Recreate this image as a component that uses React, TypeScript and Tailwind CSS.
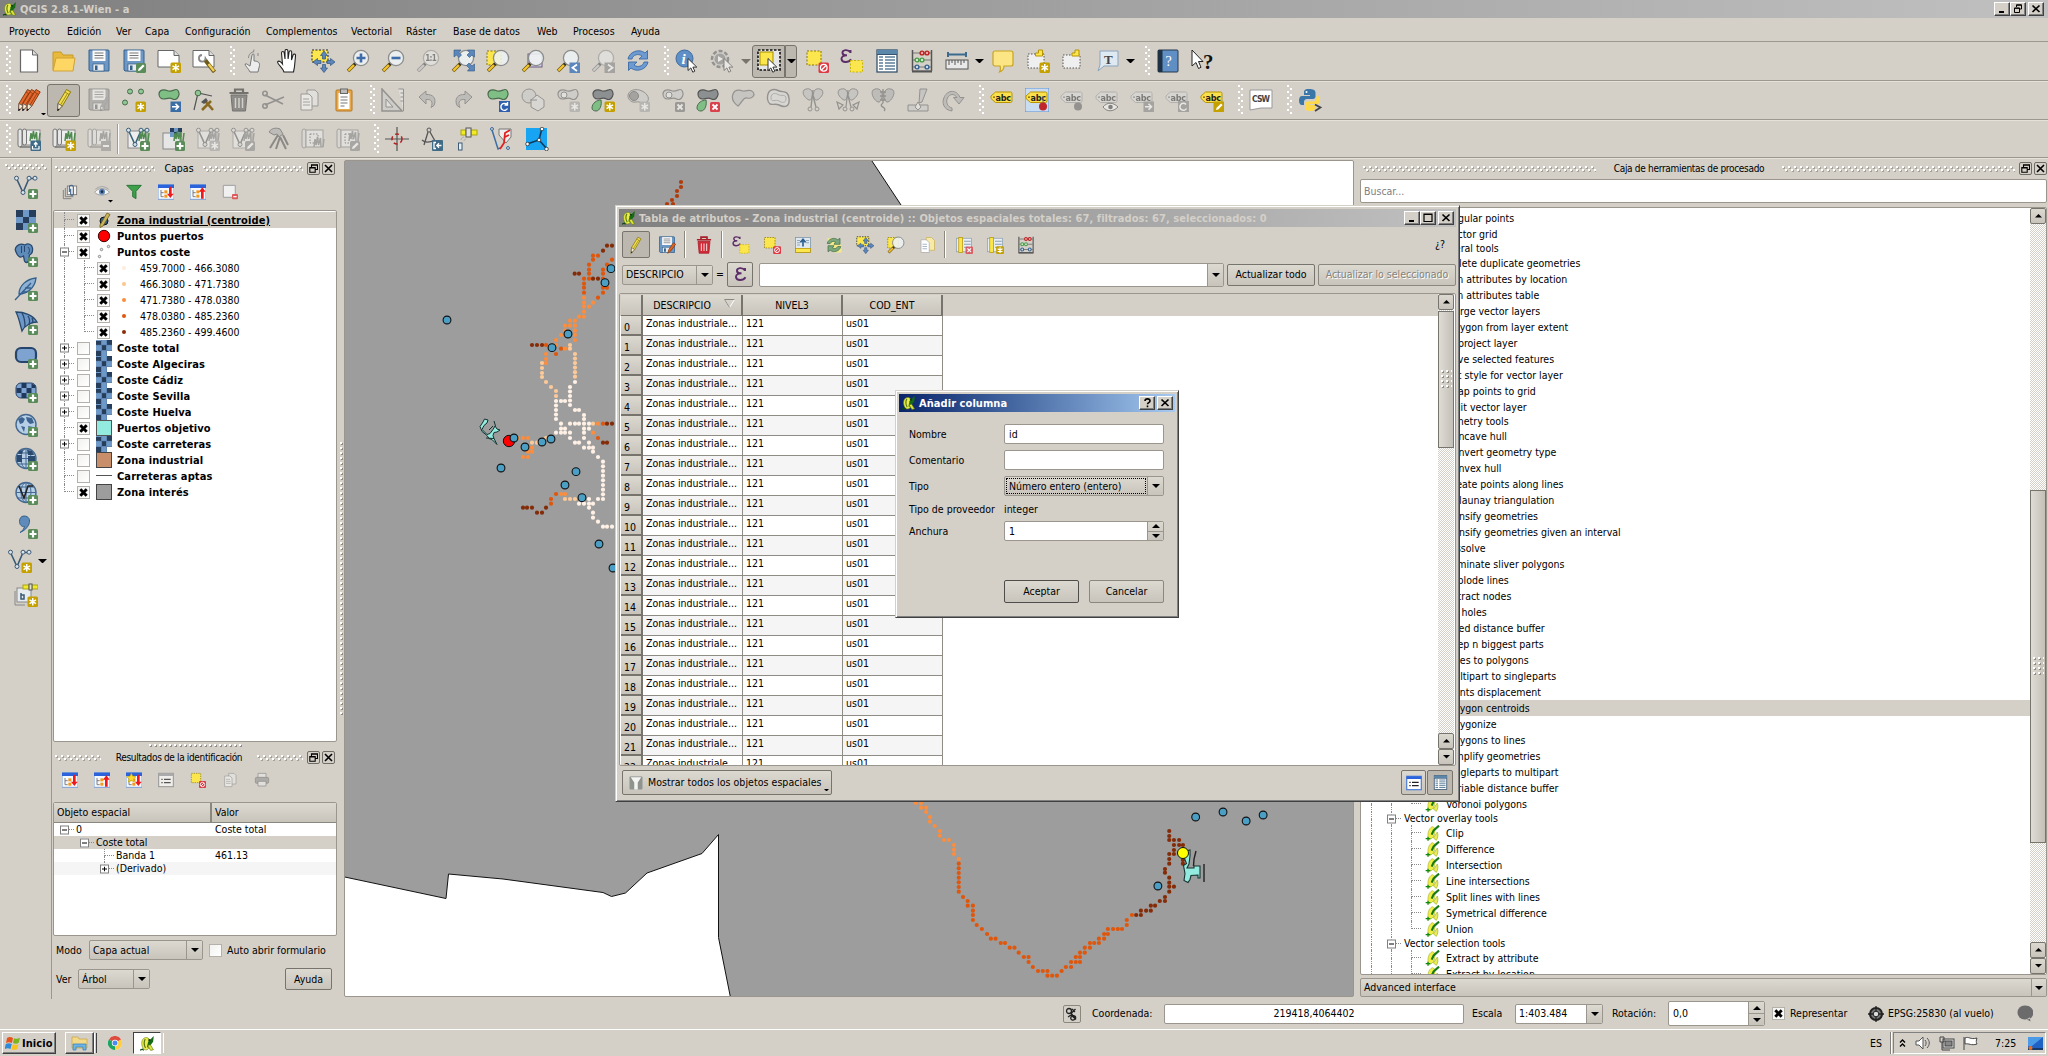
import React from "react";

type Kids = { children?: React.ReactNode };

/* ---------- icon building blocks ---------- */

function Svg({ children, s = 24, cls = "" }: Kids & { s?: number; cls?: string }) {
  return (
    <svg width={s} height={s} viewBox="0 0 24 24" fill="none" className={"shrink-0 " + cls}>
      {children}
    </svg>
  );
}

const StarBadge = () => (
  <g>
    <rect x="13.500" y="13.500" width="10.500" height="10.500" rx="1.500" fill="#c4a000" />
    <path d="M18.750 15v7.500M15.500 16.900l6.500 3.750M22 16.900l-6.500 3.750" stroke="#fff" strokeWidth="1.500" />
  </g>
);
const PlusBadge = () => (
  <g>
    <rect x="14" y="14" width="10" height="10" rx="1.500" fill="#5a8c5a" />
    <path d="M19 15.500v7M15.500 19h7" stroke="#fff" strokeWidth="2.200" />
  </g>
);
const PenBadge = () => (
  <g>
    <rect x="14" y="14" width="10" height="10" rx="1.500" fill="#5a8c5a" />
    <path d="M16 22l.6-2.200 4.400-4.400 1.600 1.600-4.400 4.400z" fill="#fff" />
  </g>
);
const RedX = () => (
  <g>
    <rect x="14" y="14" width="10" height="10" rx="1.500" fill="#d9424c" />
    <path d="M16.500 16.500l5 5M21.500 16.500l-5 5" stroke="#fff" strokeWidth="1.800" />
  </g>
);
const NoBadge = () => (
  <g>
    <rect x="13.500" y="13.500" width="10.500" height="10.500" rx="1.500" fill="#dc3b45" />
    <circle cx="18.750" cy="18.750" r="3.300" stroke="#fff" strokeWidth="1.300" />
    <path d="M16.500 21l4.500-4.500" stroke="#fff" strokeWidth="1.300" />
  </g>
);
const ArrowBadge = ({ c = "#3a6ea5" }: { c?: string }) => (
  <g>
    <rect x="13.500" y="13.500" width="10.500" height="10.500" fill={c} />
    <path d="M15 18.750h6M18.500 15.800l3 2.950-3 2.950" stroke="#fff" strokeWidth="1.600" />
  </g>
);
const Floppy = () => (
  <g>
    <path d="M2 1h19a1 1 0 0 1 1 1v20H3l-1-1z" fill="#6d97c4" stroke="#33608c" />
    <rect x="5.500" y="1.500" width="13" height="10.500" fill="#fbfbfb" />
    <path d="M7.500 4h9M7.500 6.500h9M7.500 9h9" stroke="#777" />
    <rect x="6" y="15" width="11" height="7" fill="#e8eaec" stroke="#33608c" strokeWidth=".7" />
    <rect x="8" y="16.500" width="2.500" height="4.500" fill="#33608c" />
  </g>
);
const Mag = ({ children }: Kids) => (
  <g>
    <path d="M2 22l7.500-7.500" stroke="#6b5200" strokeWidth="3.600" />
    <path d="M2.400 21.600l5.600-5.600" stroke="#f4c430" strokeWidth="2.200" />
    <path d="M8.200 15.800l2-2" stroke="#333" strokeWidth="2.600" />
    <circle cx="15" cy="9" r="7.600" fill="#eef1f2" fillOpacity=".88" stroke="#8a8d8c" strokeWidth="1.300" />
    {children}
  </g>
);
const Cursor = ({ x = 0, y = 0 }: { x?: number; y?: number }) => (
  <path
    transform={`translate(${x} ${y})`}
    d="M0 0v12l2.900-2.600 1.900 4.300 2-1-1.900-4.100h3.900z"
    fill="#fff"
    stroke="#222"
    strokeWidth=".9"
  />
);
const Pencil = ({ c = "#f0dc4c", d = "#8a7a10" }: { c?: string; d?: string }) => (
  <g>
    <path d="M6 15.500L14.500 1.500l4.200 2.400L10.300 18 5.500 23z" fill={c} stroke={d} strokeWidth="1" />
    <path d="M13 4l4.200 2.500M15.500 5.500L8.300 17.300" stroke={d} strokeWidth=".8" />
    <path d="M6 15.500l4.300 2.500L5.500 23z" fill="#f4ead0" stroke="#555" strokeWidth=".8" />
    <path d="M5.700 20.500l-.2 2.500 2-1.600z" fill="#111" />
  </g>
);
const Blob = ({ f = "#7fbf86", s = "#4a6b4c" }: { f?: string; s?: string }) => (
  <path
    d="M2 6C2 2 7 1 10 2.500s5 .3 8-.8 5 3 3.500 6.500-4 4-6.500 2.500S9 11 6.500 11 2 9 2 6z"
    fill={f}
    stroke={s}
    strokeWidth="1.200"
  />
);
const Grass = () => (
  <path d="M13 14l1-8 1 6 1.500-8 1 8 2-7 .5 9M22 14l1-8" stroke="#4f8a4f" strokeWidth="1.500" />
);
const GrassMap = () => (
  <g>
    <rect x="6" y="3" width="17" height="15" fill="#eee" stroke="#888" />
    <rect x="1" y="2" width="4" height="18" rx="2" fill="#e6e6e6" stroke="#777" />
    <rect x="5.500" y="2" width="4" height="16" rx="2" fill="#e6e6e6" stroke="#777" />
    <path d="M3 20h13" stroke="#777" strokeWidth="1.500" />
    <Grass />
  </g>
);
const Epsilon = () => (
  <path d="M10.500 3.500C8-.2 2 .8 2.500 4c.3 2 2.500 2.500 4.500 2.400-3 0-5.800 1-5.500 3.800.4 3.500 7 4 9.500 0M10.500 1v3" stroke="#5c2d68" strokeWidth="1.900" />
);
const SelYellow = ({ x = 1, y = 1, w = 15 }: { x?: number; y?: number; w?: number }) => (
  <rect x={x} y={y} width={w} height={w} fill="#fbe64d" stroke="#8a7400" strokeDasharray="2 1.500" />
);
const Vee = ({ c = "#3b5a75" }: { c?: string }) => (
  <g>
    <path d="M2.500 3.500l6.500 14L15 3.500h6" stroke={c} strokeWidth="1.600" />
    <circle cx="2.500" cy="3.200" r="2" fill="#d9e3ec" stroke={c} />
    <circle cx="9" cy="17.500" r="2" fill="#d9e3ec" stroke={c} />
    <circle cx="15" cy="3.200" r="2" fill="#d9e3ec" stroke={c} />
    <circle cx="21" cy="3.200" r="2" fill="#d9e3ec" stroke={c} />
  </g>
);
const Abacus = () => (
  <g>
    <path d="M2.500 1v21M21.500 1v21" stroke="#555" strokeWidth="1.500" />
    <path d="M2 22h20M3 4h18M3 11h18M3 18h18" stroke="#777" strokeWidth="1.200" />
    <g fill="#eaa" stroke="#b22" strokeWidth="1.400">
      <circle cx="12" cy="4" r="1.900" />
      <circle cx="17" cy="4" r="1.900" />
    </g>
    <g fill="#cec" stroke="#4a9a4a" strokeWidth="1.400">
      <circle cx="7" cy="11" r="1.900" />
      <circle cx="12" cy="11" r="1.900" />
    </g>
    <g fill="#cde" stroke="#37628f" strokeWidth="1.400">
      <circle cx="7" cy="18" r="1.900" />
      <circle cx="17" cy="18" r="1.900" />
    </g>
    <path d="M2 22.500h20" stroke="#555" strokeWidth="2" />
  </g>
);
const MoveArrows = () => (
  <g>
    <rect x="1" y="1" width="16" height="12" fill="#fbe64d" stroke="#222" strokeDasharray="2 1.500" />
    <g fill="#5c87bd" stroke="#2f5580" strokeWidth=".7">
      <path d="M13 2l3.500 4.500h-2V10h-3V6.500h-2z" />
      <path d="M13 23.500l3.500-4.500h-2v-3.500h-3V19h-2z" />
      <path d="M2 13l4.500-3.500v2H10v3H6.500v2z" />
      <path d="M24 13l-4.500-3.500v2H16v3h3.500v2z" />
    </g>
  </g>
);
const Tag = ({ hl = false }: { hl?: boolean }) => (
  <g>
    {hl && <rect x="0" y="0" width="24" height="24" fill="#c9dcf2" stroke="#5b8fcc" />}
    <path d="M5.500 4H20.500a1.500 1.500 0 0 1 1.500 1.500V13A1.500 1.500 0 0 1 20.500 14.500H5.500L1 10.500V8z" fill="#fbe04d" stroke="#b89400" />
    <circle cx="4" cy="9.200" r=".9" fill="#7a6200" />
    <text x="5.500" y="12.500" fontSize="9" fontWeight="700" fill="#222" fontFamily="DejaVu Sans Condensed" textLength="15.500">
      abc
    </text>
  </g>
);
const QLogo = () => (
  <g>
    <path d="M11 2.500C4.500 2 2 8 3 14s4 9 8 8 5-6 5-10-1-9-5-9.500z" fill="#e9ee4c" stroke="#6f8410" />
    <path d="M8.500 5c-2.500 3-2.500 10 .5 14" stroke="#5d7410" strokeWidth="2" />
    <path d="M22 0l-9 9-2 9 3 .5L21 9z" fill="#176a16" />
    <path d="M13.500 6l3 1" stroke="#0b3a0b" strokeWidth="3" />
    <path d="M12 15l5 8 4.500-1-5-8z" fill="#dfe63a" stroke="#5c7210" />
    <path d="M0 22.500l4-1.500 2 2" stroke="#0a4a0a" strokeWidth="2" />
  </g>
);
const QLeaf = () => (
  <g>
    <path d="M11 2.500C5 5 3 14 5.500 22l5-2c4-3 5-11 4-15.500z" fill="#f0ee46" stroke="#a9b52c" />
    <path d="M21 1l-8 7-3 6.500" stroke="#167a16" strokeWidth="3.200" />
    <path d="M12.500 19.500l6-9c1.500 4 1 9-1.500 12.500z" fill="#e9ec52" stroke="#9caf2a" />
    <path d="M1 20.500h7M4.500 17.500v6" stroke="#128a12" strokeWidth="2" />
  </g>
);
const Page = () => (
  <g>
    <path d="M3.500 1h12l5 5v17h-17z" fill="#fff" stroke="#666" strokeWidth="1.200" />
    <path d="M15.500 1v5h5" fill="#ddd" stroke="#666" />
  </g>
);
const TreeIcon = ({ up = false, star = false }: { up?: boolean; star?: boolean }) => (
  <g>
    <rect x="0" y="1" width="24" height="22" fill="#f4f8ff" stroke="#7d9fd6" strokeWidth="1.500" />
    <rect x="0" y="1" width="24" height="5" fill="#2a63dc" />
    <path d="M4.500 9v10h4M4.500 13h4" stroke="#777" strokeWidth="1.400" />
    <rect x="9.500" y="9.500" width="4.500" height="4.500" fill="#f29a1f" />
    <rect x="9.500" y="16" width="4.500" height="4.500" fill="#f29a1f" />
    {star && <path d="M8 2l2 4.500 5 .5-3.800 3.300L12.500 15 8 12.500 3.500 15l1.200-4.700L1 7l5-.5z" fill="#ffd92b" stroke="#c9a400" />}
    {up ? <path d="M18.500 5l5 6.500h-3V22h-4V11.500h-3z" fill="#f01818" /> : <path d="M18.500 21l5-6.500h-3V4h-4v10.500h-3z" fill="#f01818" />}
  </g>
);
const RasterSq = () => (
  <g>
    <rect x="2" y="1" width="20" height="20" fill="#6e98c8" />
    <path d="M2 1h7v7H2zM15 1h7v7h-7zM9 8h6v6H9zM2 14h7v7H2zM15 14h7v7h-7z" fill="#263d5c" />
  </g>
);
const Globe = () => (
  <g>
    <circle cx="12" cy="11.500" r="10" fill="#b6cfe6" stroke="#44688f" strokeWidth="1.400" />
    <ellipse cx="12" cy="11.500" rx="5" ry="10" stroke="#44688f" />
    <path d="M2 11.500h20M12 1.500v20M3.500 6h17M3.500 17h17" stroke="#44688f" />
  </g>
);
const TrashCan = ({ f, s, l }: { f: string; s: string; l: string }) => (
  <g>
    <path d="M4 7h16l-1.500 16h-13z" fill={f} stroke={s} />
    <path d="M2.500 5h19M8 4V1.500h8V4" stroke={s} strokeWidth="2.200" />
    <path d="M8.500 10v10M12 10v10M15.500 10v10" stroke={l} strokeWidth="1.500" />
  </g>
);

/* ---------- icon table ---------- */

const icons: Record<string, React.ReactNode> = {
  new: <Page />,
  open: (
    <g>
      <path d="M1 3h8l2 3h10v15H1z" fill="#e8b93a" stroke="#c79a28" />
      <path d="M4 9h19l-2 13H1z" fill="#fdd663" stroke="#cfa23a" />
    </g>
  ),
  save: <Floppy />,
  saveas: (
    <g>
      <Floppy />
      <PenBadge />
    </g>
  ),
  composer: (
    <g>
      <path d="M1 1.500h16l5 5V18H1z" fill="#fff" stroke="#666" />
      <path d="M17 1.500v5h5" fill="#ddd" stroke="#666" />
      <StarBadge />
    </g>
  ),
  manager: (
    <g>
      <path d="M1 1.500h16l5 5V18H1z" fill="#fff" stroke="#666" />
      <path d="M17 1.500v5h5" fill="#ddd" stroke="#666" />
      <path d="M10 6a3.300 3.300 0 1 0 3.500 3.500L15 12" stroke="#888" strokeWidth="1.800" />
      <path d="M13.500 11.500l9 11.500" stroke="#6f5a18" strokeWidth="4" />
      <path d="M16.500 15l5.500 7" stroke="#f2cf55" strokeWidth="2.400" />
    </g>
  ),
  touch: (
    <g>
      <path d="M9 23c-1-3-5-6-5-8 2-1 4 2 5 2l2-11c.5-1.500 2-1.500 2 0v6c3 0 6 1 5.500 4.500L17 23z" fill="#ececec" stroke="#777" />
      <path d="M7.500 9c0-4 3-6 5-6l.5-2.500M17 4v3" stroke="#888" />
    </g>
  ),
  pan: (
    <path
      d="M8 23c-1-4-6-7-6.500-10C3 11 5 13 6.500 15L5.500 4c0-2 2.500-2 2.700 0L9 10V2c.2-2 2.700-2 2.900 0l.2 8 1-7c.3-1.800 2.600-1.600 2.600.3L15.500 11l1.600-5c.6-1.600 2.600-1 2.400.6C19 12 19 17 17.500 23z"
      fill="#fff"
      stroke="#222"
      strokeWidth="1.100"
    />
  ),
  pansel: <MoveArrows />,
  zin: (
    <Mag>
      <path d="M15 4.500v9M10.500 9h9" stroke="#3d6ca8" strokeWidth="2.600" />
    </Mag>
  ),
  zout: (
    <Mag>
      <path d="M10.500 9h9" stroke="#3d6ca8" strokeWidth="2.600" />
    </Mag>
  ),
  z11: (
    <Mag>
      <text x="9.300" y="12" fontSize="8" fontWeight="700" fill="#333" fontFamily="DejaVu Sans Condensed" textLength="11.500">
        1:1
      </text>
    </Mag>
  ),
  zfull: (
    <g>
      <Mag />
      <g fill="#5c87bd" stroke="#2f5580" strokeWidth=".6">
        <path d="M3 1h7L8 3.500 10.500 6 8 8.500 5.500 6 3 8z" />
        <path d="M23.500 1h-7l2 2.500L16 6l2.500 2.500L21 6l2.500 2z" />
        <path d="M23.500 22h-7l2-2.500-3-3 2.500-2.500 3 3 2.500-2z" />
      </g>
    </g>
  ),
  zsel: (
    <g>
      <SelYellow x={1} y={2} w={14} />
      <Mag />
    </g>
  ),
  zlay: (
    <g>
      <rect x="7" y="5" width="14" height="13" fill="#d8d0e8" stroke="#6b5a80" />
      <Mag />
    </g>
  ),
  zlast: (
    <g>
      <Mag />
      <rect x="13.500" y="13.500" width="10.500" height="10.500" fill="#5c87bd" />
      <path d="M21 15.500l-4.500 3.200 4.500 3.200" stroke="#fff" strokeWidth="1.800" />
    </g>
  ),
  znext: (
    <g>
      <Mag />
      <rect x="13.500" y="13.500" width="10.500" height="10.500" fill="#777" />
      <path d="M17 15.500l4.500 3.200-4.500 3.200" stroke="#fff" strokeWidth="1.800" />
    </g>
  ),
  refresh: (
    <g fill="#6d9bd1" stroke="#3a6aa5" strokeWidth=".9">
      <path d="M2 10C3 3 13-1 19 4l2.500-2.500V10H13l3-3c-4-3-9-1-10 3z" />
      <path d="M22 13c-1 7-11 11-17 6l-2.500 2.500V13H11l-3 3c4 3 9 1 10-3z" />
    </g>
  ),
  info: (
    <g>
      <circle cx="9.500" cy="9.500" r="8.500" fill="#5e8fc6" stroke="#3d6a9f" />
      <text x="6.500" y="15" fontSize="15" fontStyle="italic" fontWeight="700" fill="#fff" fontFamily="Liberation Serif">
        i
      </text>
      <Cursor x={13} y={9.500} />
    </g>
  ),
  action: (
    <g>
      <circle cx="10" cy="10" r="8" fill="#ccc" stroke="#555" strokeWidth="2.500" strokeDasharray="4 2" />
      <circle cx="10" cy="10" r="5.500" fill="#777" />
      <path d="M8 7l5 3-5 3z" fill="#fff" />
      <Cursor x={14} y={9.500} />
    </g>
  ),
  select: (
    <g>
      <rect x="1" y="1" width="22" height="20" fill="#e6e6e6" stroke="#111" strokeWidth="1.600" strokeDasharray="2.500 1.500" />
      <rect x="3" y="3" width="13" height="13" fill="#fbe64d" stroke="#a58d00" />
      <Cursor x={11} y={9.500} />
    </g>
  ),
  desel: (
    <g>
      <SelYellow x={2} y={2} w={14} />
      <NoBadge />
    </g>
  ),
  expr: (
    <g>
      <Epsilon />
      <rect x="10.500" y="11.500" width="12" height="11.500" fill="#fbe64d" stroke="#c9b400" strokeDasharray="2 1.500" />
    </g>
  ),
  table: (
    <g>
      <rect x="2" y="1" width="20" height="22" fill="#fff" stroke="#35536e" strokeWidth="1.300" />
      <rect x="2" y="1" width="20" height="4" fill="#5b87ab" />
      <path d="M2 5.500h20" stroke="#35536e" />
      <path d="M4 8h4M10 8h10M4 11h4M10 11h10M4 14h4M10 14h10M4 17h4M10 17h10M4 20h4M10 20h10" stroke="#5b7d99" strokeWidth="1.500" />
    </g>
  ),
  abacus: <Abacus />,
  measure: (
    <g>
      <path d="M3 5.500h18M3 3v5M21 3v5" stroke="#3b6a8f" strokeWidth="2" />
      <rect x="1" y="11" width="22" height="9" fill="#e9e9e9" stroke="#555" />
      <path d="M4 11v5M7 11v3M10 11v5M13 11v3M16 11v5M19 11v3" stroke="#555" />
    </g>
  ),
  tip: (
    <path d="M4 2h16a2 2 0 0 1 2 2v11a2 2 0 0 1-2 2h-7c0 3-1.500 5-4.500 6 1-2 1.200-4 .5-6H4a2 2 0 0 1-2-2V4a2 2 0 0 1 2-2z" fill="#fbe584" stroke="#c9a420" strokeWidth="1.200" />
  ),
  bmnew: (
    <g>
      <rect x="2" y="5" width="16" height="14" fill="#efefef" stroke="#555" strokeDasharray="1.500 1.500" />
      <path d="M12.500 1h4v6h-7V4h3z" fill="#fbe64d" stroke="#b89400" />
      <StarBadge />
    </g>
  ),
  bm: (
    <g>
      <rect x="2" y="6" width="17" height="13" fill="#efefef" stroke="#555" strokeDasharray="1.500 1.500" />
      <path d="M14 1h4v6h-7V4h3z" fill="#fbe64d" stroke="#b89400" />
    </g>
  ),
  textann: (
    <g>
      <path d="M4 2h18v15H8l-6 5 2-6z" fill="#dfe9f2" stroke="#8aa4bd" />
      <text x="8" y="14.500" fontSize="13" fontWeight="700" fill="#444" fontFamily="Liberation Serif">
        T
      </text>
    </g>
  ),
  help: (
    <g>
      <rect x="2" y="1" width="20" height="22" rx="1" fill="#5f8fc4" stroke="#24384c" />
      <rect x="2" y="1" width="4.500" height="22" fill="#1f3145" />
      <text x="9.500" y="17" fontSize="14" fill="#fff" fontFamily="Liberation Serif">
        ?
      </text>
    </g>
  ),
  whats: (
    <g>
      <path d="M1 1v16l4-3.500 2.500 6 2.500-1.200L7.500 12.500H12z" fill="#fff" stroke="#222" />
      <text x="12" y="20" fontSize="21" fontWeight="700" fill="#111" fontFamily="Liberation Serif">
        ?
      </text>
    </g>
  ),
  pencils: (
    <g>
      <g transform="translate(-4 0)">
        <Pencil c="#e8692e" d="#8a3a10" />
      </g>
      <g transform="translate(0 0)">
        <Pencil c="#e8692e" d="#8a3a10" />
      </g>
      <g transform="translate(4.500 0)">
        <Pencil c="#e8692e" d="#8a3a10" />
      </g>
    </g>
  ),
  pencil: <Pencil />,
  savepen: (
    <g>
      <Floppy />
      <g transform="translate(10 8) scale(.65)">
        <Pencil c="#e08040" />
      </g>
    </g>
  ),
  addpt: (
    <g>
      <g fill="#8fc794" stroke="#4a6b4c">
        <circle cx="8" cy="3.500" r="2.500" />
        <circle cx="19" cy="3.500" r="2.500" />
        <circle cx="3" cy="14.500" r="2.500" />
      </g>
      <StarBadge />
    </g>
  ),
  movef: (
    <g>
      <Blob />
      <ArrowBadge />
    </g>
  ),
  node: (
    <g>
      <path d="M2 22L6 5l14 3" stroke="#555" strokeWidth="1.200" />
      <circle cx="6" cy="5" r="2.800" fill="#8fc794" stroke="#4a6b4c" />
      <path d="M10 22l9-9M21 22l-8-9" stroke="#8a6a20" strokeWidth="2.600" />
      <path d="M9 14l5-4 2 3-4 3z" fill="#555" />
    </g>
  ),
  trash: <TrashCan f="#8e8c88" s="#74726e" l="#d4d0c8" />,
  cut: (
    <g stroke="#555" strokeWidth="1.600">
      <path d="M3 7l18 9M3 17l19-8" />
      <circle cx="3" cy="5.500" r="2.200" />
      <circle cx="3" cy="18" r="2.200" />
    </g>
  ),
  copy: (
    <g>
      <path d="M10 2h8l3 3v13H10z" fill="#eee" stroke="#666" />
      <path d="M4 6h8l3 3v13H4z" fill="#fff" stroke="#666" />
      <path d="M6 11h6M6 14h7M6 17h7" stroke="#777" />
    </g>
  ),
  paste: (
    <g>
      <rect x="4" y="2" width="16" height="21" rx="1" fill="#e9a84a" stroke="#b5771f" />
      <rect x="6.500" y="5" width="11" height="16" fill="#fff" />
      <rect x="8.500" y="1" width="7" height="4.500" fill="#bbb" stroke="#666" />
      <path d="M8.500 9h7M8.500 12h7M8.500 15h7M8.500 18h4" stroke="#777" />
    </g>
  ),
  cad: (
    <g>
      <path d="M1 1v22h20z" fill="#ccc" stroke="#555" strokeWidth="1.500" />
      <path d="M5 11v8h7z" fill="#eee" stroke="#555" />
      <path d="M17.500 1h5v22" stroke="#555" fill="#eee" />
      <path d="M19.500 5h3M19.500 9h3M19.500 13h3" stroke="#555" />
    </g>
  ),
  undo: <path d="M3 9l7-6v3.500c7-.5 11 4 8 11l-3 2c2.500-6 0-8.500-5-8V16z" fill="#aaa" stroke="#555" />,
  redo: <path d="M21 9l-7-6v3.500c-7-.5-11 4-8 11l3 2c-2.500-6 0-8.500 5-8V16z" fill="#aaa" stroke="#555" />,
  rotate: (
    <g>
      <Blob />
      <rect x="13" y="13" width="11" height="11" fill="#2f5fae" />
      <path d="M21.500 20.500a3.500 3.500 0 1 1-.5-4M21.500 14v3h-3" stroke="#fff" strokeWidth="1.400" />
    </g>
  ),
  simplify: (
    <g>
      <circle cx="8" cy="8" r="7" fill="#ccc" stroke="#555" />
      <path d="M10 12l6-5 7 5v7l-6 4-7-4z" fill="#ddd" stroke="#555" />
      <path d="M9 12h7" stroke="#555" />
    </g>
  ),
  ring: (
    <g>
      <Blob f="#ccc" s="#555" />
      <circle cx="8" cy="7" r="3" fill="#eee" stroke="#555" />
      <StarBadge />
    </g>
  ),
  part: (
    <g>
      <Blob f="#8d9090" s="#555" />
      <path d="M1 20c0-5 5-8 9-8 1 5-1 11-5 11-2 0-4-1-4-3z" fill="#7fbf86" stroke="#4a6b4c" />
      <StarBadge />
    </g>
  ),
  fillring: (
    <g>
      <path d="M2 8C2 2 10 0 16 3s8 8 5 11-7-1-11 0-8-2-8-6z" fill="#ccc" stroke="#555" />
      <circle cx="8" cy="8" r="4.500" fill="#777" stroke="#444" />
      <StarBadge />
    </g>
  ),
  delring: (
    <g>
      <Blob f="#ccc" s="#555" />
      <circle cx="8" cy="7" r="3" fill="#eee" stroke="#555" />
      <RedX />
    </g>
  ),
  delpart: (
    <g>
      <Blob f="#8d9090" s="#555" />
      <path d="M1 20c0-5 5-8 9-8 1 5-1 11-5 11-2 0-4-1-4-3z" fill="#7fbf86" stroke="#4a6b4c" />
      <RedX />
    </g>
  ),
  reshape: <path d="M2 6c2-5 7-4 10-3s7-3 10 1-2 7-6 6-5 5-9 8C3 15 0 11 2 6z" fill="#bbb" stroke="#555" strokeWidth="1.200" />,
  offset: (
    <g>
      <path d="M1.500 11C1 2 7 0 12 2.500s10-1 11 8-5 9-10 6.500-10 3-11.500-6z" fill="#ddd" stroke="#555" strokeWidth="1.400" />
      <path d="M5 10c0-5 4-5.500 7-3.500s8-1 8 4-4 4.500-7 2.500-8 2-8-3z" stroke="#888" />
    </g>
  ),
  split: (
    <g stroke="#555">
      <path d="M3 2c5-3 8 0 8.500 3s-1 8-3.500 7-8-6-5-10zM21 2c-5-3-8 0-8.500 3s1 8 3.500 7 8-6 5-10z" fill="#bbb" />
      <path d="M12 2l-2 17M12 8l3 11" strokeWidth="1.400" />
      <circle cx="9" cy="21" r="2" />
      <circle cx="16" cy="21" r="2" />
    </g>
  ),
  splitp: (
    <g stroke="#555">
      <path d="M3 2c5-3 8 0 8.500 3s-1 8-3.500 7-8-6-5-10zM21 2c-5-3-8 0-8.500 3s1 8 3.500 7 8-6 5-10z" fill="#bbb" />
      <path d="M12 2l-2 17M12 8l3 11M1 14l6 3-4 4zM23 14l-6 3 4 4z" strokeWidth="1.200" />
      <circle cx="9" cy="21" r="2" />
      <circle cx="16" cy="21" r="2" />
    </g>
  ),
  merge: (
    <g stroke="#555">
      <path d="M2 2c5-3 8 0 9 3s-1 10-4 9-8-8-5-12zM22 2c-5-3-8 0-9 3s1 10 4 9 8-8 5-12z" fill="#aaa" />
      <path d="M12 1v14M9 4h6M9 8h6M9 12h6M12 15c-6 4 5 4 1 8" strokeWidth="1.400" />
    </g>
  ),
  ptsym: (
    <g stroke="#555">
      <path d="M14 1h7l-5 13-3 1z" fill="#bbb" />
      <path d="M2 17h20v6H2z" fill="#ccc" />
      <path d="M12 14l3 5-3 3-3-3z" fill="#eee" />
    </g>
  ),
  rotpt: <path d="M11 23C3 22 0 15 3.500 8.500S15.500 1 19 9.500h4L18 16l-5.500-6.500H16C13 5 8.500 6 6.500 10S6.500 19 11 20z" fill="#aaa" stroke="#555" />,
  abc: <Tag />,
  abcpin: (
    <g>
      <Tag hl />
      <path d="M18 8v8" stroke="#777" />
      <circle cx="18" cy="18.500" r="4" fill="#c0272d" />
    </g>
  ),
  abcpin2: (
    <g>
      <Tag />
      <circle cx="18" cy="18.500" r="4" fill="#555" />
    </g>
  ),
  abceye: (
    <g>
      <Tag />
      <path d="M8 19c4-5 10-5 15 0-5 5-11 5-15 0z" fill="#fff" stroke="#333" />
      <circle cx="15.500" cy="19" r="2.300" fill="#333" />
    </g>
  ),
  abcmove: (
    <g>
      <Tag />
      <ArrowBadge c="#777" />
    </g>
  ),
  abcrot: (
    <g>
      <Tag />
      <rect x="13" y="13" width="11" height="11" fill="#777" />
      <path d="M21.500 20.500a3.500 3.500 0 1 1-.5-4" stroke="#fff" strokeWidth="1.500" />
    </g>
  ),
  abced: (
    <g>
      <Tag />
      <rect x="13.500" y="13.500" width="10.500" height="10.500" fill="#c4a000" />
      <path d="M16 22l.6-2.200 4.400-4.400 1.600 1.600-4.400 4.400z" fill="#fff" />
    </g>
  ),
  csw: (
    <g>
      <path d="M1 2h22v18H12l-11 2z" fill="#fff" stroke="#999" />
      <text x="3" y="13.500" fontSize="8.500" fontWeight="700" fill="#444" fontFamily="DejaVu Sans Condensed" textLength="18">
        CSW
      </text>
    </g>
  ),
  python: (
    <g>
      <path d="M11 1c-5 0-5 2-5 3.500V7h6v1H4C2 8 1 10 1 12.500S2 17 4 17h2v-3c0-2 1.500-3 3-3h6c1.500 0 2.500-1 2.500-2.500V4.500C17.500 2 15 1 11 1z" fill="#3b76a9" />
      <path d="M12 23c5 0 5-2 5-3.500V17h-6v-1h8c2 0 3-2 3-4.500S21 8 19.500 8h-1v2.500c0 2-1.500 3-3 3H10c-1.500 0-3 1-3 2.500v3.500C7 22 9 23 12 23z" fill="#ffd947" />
      <circle cx="8.500" cy="4" r="1" fill="#fff" />
      <path d="M17 16.500l5.500 3-5.500 3.500" stroke="#444" strokeWidth="1.800" />
    </g>
  ),
  gopen: (
    <g>
      <GrassMap />
      <rect x="13.500" y="13.500" width="10.500" height="10.500" rx="1" fill="#3f6b87" />
      <path d="M15.500 19v3h6.500v-3M18.750 20v-4M17 17.500l1.750-2 1.750 2" stroke="#fff" strokeWidth="1.200" />
    </g>
  ),
  gnew: (
    <g>
      <GrassMap />
      <StarBadge />
    </g>
  ),
  gclose: (
    <g>
      <GrassMap />
      <rect x="14" y="14" width="10" height="10" fill="#888" />
      <path d="M16 19h6" stroke="#fff" strokeWidth="2" />
    </g>
  ),
  gvec: (
    <g>
      <rect x="2" y="4" width="19" height="17" fill="#eee" stroke="#888" />
      <Vee c="#3b6277" />
      <Grass />
      <PlusBadge />
    </g>
  ),
  grast: (
    <g>
      <rect x="2" y="6" width="17" height="16" fill="#e6e6e6" stroke="#888" />
      <rect x="9" y="1" width="12" height="9" fill="#6e98c8" />
      <path d="M9 1h4v4H9zM17 1h4v4h-4zM13 5h4v4h-4z" fill="#263d5c" />
      <Grass />
      <PlusBadge />
    </g>
  ),
  gvnew: (
    <g>
      <rect x="2" y="4" width="19" height="17" fill="#eee" stroke="#888" />
      <Vee c="#555" />
      <Grass />
      <StarBadge />
    </g>
  ),
  gved: (
    <g>
      <rect x="2" y="4" width="19" height="17" fill="#eee" stroke="#888" />
      <Vee c="#555" />
      <Grass />
      <PenBadge />
    </g>
  ),
  gtools: (
    <g stroke="#444">
      <path d="M3 5c3-5 9-4 11-3l3 5-4 3-2-3-3 1z" fill="#aaa" />
      <path d="M12 8l-8 13M14 10l6 12M10 22l4-12M17 8l5 10" strokeWidth="2" />
    </g>
  ),
  greg: (
    <g>
      <rect x="1" y="2" width="4" height="19" rx="2" fill="#ddd" stroke="#777" />
      <rect x="5" y="3" width="17" height="17" fill="#eee" stroke="#777" />
      <rect x="9" y="7" width="8" height="9" stroke="#444" strokeDasharray="1.500 1.500" />
      <g transform="translate(0 6)">
        <Grass />
      </g>
    </g>
  ),
  greged: (
    <g>
      <rect x="1" y="2" width="4" height="19" rx="2" fill="#ddd" stroke="#777" />
      <rect x="5" y="3" width="17" height="17" fill="#eee" stroke="#777" />
      <rect x="9" y="7" width="8" height="9" stroke="#444" strokeDasharray="1.500 1.500" />
      <Grass />
      <PenBadge />
    </g>
  ),
  cross: (
    <g>
      <path d="M0 12h24M12 0v24" stroke="#555" strokeWidth="1.200" />
      <circle cx="12" cy="12" r="5" stroke="#b02020" strokeWidth="1.500" strokeDasharray="4 3" />
    </g>
  ),
  coord: (
    <g>
      <circle cx="9" cy="3" r="2" stroke="#555" />
      <path d="M8 5L4 18M10 5l5 9M2 13c4 4 9 2 13 0" stroke="#555" strokeWidth="1.300" />
      <rect x="12" y="13" width="11" height="11" rx="1" fill="#3f6b87" />
      <path d="M16 15.500h-2v6h2M21.500 18.500H17M19 16.200l-2.200 2.300 2.200 2.300" stroke="#fff" strokeWidth="1.300" />
    </g>
  ),
  gps: (
    <g>
      <rect x="6" y="3" width="5" height="5" fill="#f1ea26" stroke="#a9a410" />
      <rect x="16" y="3" width="6" height="5" fill="#f1ea26" stroke="#a9a410" />
      <rect x="11" y="1" width="5" height="9" fill="#ddd" stroke="#555" />
      <rect x="3.500" y="16" width="3.500" height="7" fill="#e7eef5" stroke="#3b5a75" />
      <path d="M6 13c0-2 2-3 3-3M9 14c0-1 1-2 2-2" stroke="#aaa" />
    </g>
  ),
  route: (
    <g>
      <path d="M2 3l6 19 2-1" stroke="#3a6ea5" strokeWidth="1.500" />
      <path d="M9 2h12v8l-5 6-7-8z" fill="#eee" stroke="#777" />
      <path d="M10 22l4-6 1-10 5-3M15 10l4-2" stroke="#d22" strokeWidth="1.800" />
      <circle cx="2" cy="2" r="1.500" stroke="#3a6ea5" />
      <circle cx="18" cy="21" r="1.500" stroke="#3a6ea5" />
    </g>
  ),
  topo: (
    <g>
      <rect x="1" y="1" width="21" height="22" fill="#16a4f3" />
      <path d="M17 1l-3 12-12 4M14 13l8 9" stroke="#0b3a5c" strokeWidth="1.600" />
      <g fill="#fff" stroke="#333" strokeWidth=".8">
        <circle cx="17" cy="2" r="1.800" />
        <circle cx="14" cy="13" r="1.800" />
        <circle cx="2.500" cy="17" r="1.800" />
        <circle cx="21.500" cy="22" r="1.800" />
      </g>
    </g>
  ),
  /* layer sources */
  lvec: (
    <g>
      <Vee />
      <PlusBadge />
    </g>
  ),
  lrast: (
    <g>
      <RasterSq />
      <PlusBadge />
    </g>
  ),
  lpg: (
    <g>
      <path d="M3 3c3-3 6-2 8-1 3-2 7-1 7.500 3s-1 6-3 7l-1 6c-1 2-3 2-4 0l-1-5c-3 2-5 1-6.500-2S0 6 3 3z" fill="#5f8bbb" stroke="#27496e" strokeWidth="1.300" />
      <path d="M7.500 3v7M14 4c2 2 2 5 0 7M10.500 3v6" stroke="#27496e" />
      <PlusBadge />
    </g>
  ),
  lfeat: (
    <g>
      <path d="M22 1C12 2 5 9 5 17c8 0 16-6 17-16z" fill="#8fb1d4" stroke="#33608c" strokeWidth="1.300" />
      <path d="M1 23L17 6M8 15h5M11 11h6" stroke="#33608c" strokeWidth="1.300" />
      <PlusBadge />
    </g>
  ),
  lmssql: (
    <g>
      <path d="M2 1c8 0 17 3 21 10-5 0-12 3-15 9C6 13 5 7 2 1z" fill="#6e98c8" stroke="#27496e" strokeWidth="1.300" />
      <path d="M8 2c3 5 3 10 3 14M14 5c2 3 2 6 1 9M18 7c1 2 1 4 0 5" stroke="#27496e" strokeWidth="1.300" />
      <PlusBadge />
    </g>
  ),
  lora: (
    <g>
      <rect x="2" y="3" width="20" height="14" rx="5" fill="#7ea3d0" stroke="#26456b" strokeWidth="2.200" />
      <PlusBadge />
    </g>
  ),
  lorar: (
    <g>
      <rect x="2" y="4" width="20" height="15" rx="5" fill="#7ea3d0" stroke="#26456b" />
      <path d="M2.500 9h5v5h-5zM7.500 4h5v5h-5zM12.500 9h5v5h-5zM17.500 4.500l4 2V9h-4zM7.500 14h5v5h-5z" fill="#1f3a5c" />
      <PlusBadge />
    </g>
  ),
  lwms: (
    <g>
      <circle cx="12" cy="11.500" r="10" fill="#b6cfe6" stroke="#44688f" strokeWidth="1.400" />
      <path d="M4 6l4-2 3 2-2 4-3 1zM12 4l6 1 2 5-4 1-3-3zM7 13l4 1-1 5zM14 13l5 1-3 4z" fill="#3d6490" />
      <PlusBadge />
    </g>
  ),
  lwcs: (
    <g>
      <Globe />
      <path d="M5 4l4-1-1 4H4zM13 3l5 1 2 4h-6zM3 8h5v7H3zM14 9h7v6h-7z" fill="#2b4a70" />
      <PlusBadge />
    </g>
  ),
  lwfs: (
    <g>
      <Globe />
      <path d="M5 5l5 12 4-12h5" stroke="#222" strokeWidth="1.600" />
      <PlusBadge />
    </g>
  ),
  lcsv: (
    <g>
      <path d="M10 1c5 0 6.500 4 5 8s-5 7-9 8.500c3-2 4-4 4.500-6-3 .5-5-2-5-5S7 1 10 1z" fill="#5f8bbb" stroke="#33608c" />
      <PlusBadge />
    </g>
  ),
  lnew: (
    <g>
      <Vee />
      <StarBadge />
    </g>
  ),
  lgps: (
    <g>
      <path d="M1 8v14h10" stroke="#888" />
      <rect x="3" y="5" width="14" height="14" fill="#e6ebef" stroke="#888" />
      <rect x="9" y="2" width="6" height="4" fill="#f1ea26" stroke="#a9a410" />
      <rect x="18" y="2" width="6" height="4" fill="#f1ea26" stroke="#a9a410" />
      <rect x="15" y="1" width="3" height="6" fill="#ddd" stroke="#555" />
      <path d="M7 10v6h3v-4H7" stroke="#3b5a75" strokeWidth="1.500" />
      <StarBadge />
    </g>
  ),
  /* layer panel */
  addgroup: (
    <g>
      <path d="M2 9v13h12M5 6v13h12" stroke="#777" strokeWidth="1.300" />
      <rect x="8" y="3" width="14" height="13" fill="#f4f4f4" stroke="#777" strokeWidth="1.300" />
      <path d="M11 12V5a3 3 0 0 1 6 0v10a2 2 0 0 1-4 0V7" stroke="#3a5f85" strokeWidth="1.600" />
    </g>
  ),
  eye: (
    <g>
      <path d="M1 12.500C6 5 18 5 23 12.500 18 18 6 18 1 12.500z" fill="#f5f5f5" stroke="#999" strokeWidth="1.300" />
      <path d="M2 8C8 2.500 16 2.500 22 8" stroke="#aaa" strokeWidth="1.600" />
      <circle cx="12" cy="11.500" r="4.500" fill="#5d82b8" />
      <circle cx="12" cy="11.500" r="2" fill="#1b2f4d" />
    </g>
  ),
  filter: <path d="M1 2h22l-8 9v11l-5-3v-8z" fill="#3fa04b" stroke="#1f6e2c" strokeWidth="1.300" />,
  expand: <TreeIcon />,
  collapse: <TreeIcon up />,
  expnew: <TreeIcon star />,
  remove: (
    <g>
      <rect x="2" y="2" width="18" height="18" rx="1" fill="#f0f0f0" stroke="#aaa" strokeWidth="1.800" />
      <rect x="15" y="15" width="9" height="8" rx="1.500" fill="#dd5a5a" />
      <path d="M17 19h5" stroke="#fff" strokeWidth="1.800" />
    </g>
  ),
  form: (
    <g>
      <rect x="1" y="2" width="22" height="20" fill="#efeeeb" stroke="#999" strokeWidth="1.600" />
      <path d="M1 4h22" stroke="#aaa" strokeWidth="4" />
      <path d="M5 11h2M9 11h10M5 16h2M9 16h10" stroke="#555" strokeWidth="2" />
    </g>
  ),
  formb: (
    <g>
      <rect x="1" y="2" width="22" height="20" fill="#fff" stroke="#5a86d8" strokeWidth="2" />
      <path d="M1 4h22" stroke="#2a63dc" strokeWidth="4" />
      <path d="M5 11h2M9 11h10M5 16h2M9 16h10" stroke="#222" strokeWidth="2" />
    </g>
  ),
  print: (
    <g stroke="#444">
      <path d="M6 8V2h12v6" fill="#eee" />
      <rect x="2" y="8" width="20" height="9" rx="2" fill="#888" />
      <path d="M6 14h12v7H6z" fill="#eee" />
    </g>
  ),
  /* attribute table */
  floppyed: (
    <g>
      <Floppy />
      <path d="M13 23l1.500-5 6-9 3 2-6.500 9z" fill="#e0661f" stroke="#8a3a10" />
    </g>
  ),
  trashred: <TrashCan f="#cf2b36" s="#a81f2a" l="#f3c9cc" />,
  seltop: (
    <g>
      <rect x="2" y="2" width="20" height="20" fill="#dfe8ef" stroke="#7b93a8" />
      <path d="M4 6h4M4 9h4M4 12h4M16 6h4M16 9h4" stroke="#7b93a8" />
      <path d="M12 14V5M8.500 8.500L12 4.500l3.500 4" stroke="#2f5f8f" strokeWidth="2.200" />
      <rect x="2" y="16.500" width="20" height="5.500" fill="#fbe64d" stroke="#b89400" />
    </g>
  ),
  invert: (
    <g>
      <path d="M3 3h9l10 10v9H12z" fill="#f3e98a" />
      <g fill="#7aa77c" stroke="#47724a">
        <path d="M3 10c1-6 9-9 14-5l3-2v8h-8l2-3c-3-2-6 0-7 2z" />
        <path d="M21 14c-1 6-9 9-14 5l-3 2v-8h8l-2 3c3 2 6 0 7-2z" />
      </g>
    </g>
  ),
  copyrow: (
    <g>
      <path d="M11 2h7l4 4v13H11z" fill="#f7e9a8" stroke="#c9b25a" />
      <path d="M4 5h7l4 4v13H4z" fill="#fff" stroke="#aaa" />
      <path d="M6 11h6M6 14h6M6 17h6" stroke="#8aa0b5" />
    </g>
  ),
  delcol: (
    <g>
      <rect x="2" y="3" width="20" height="18" fill="#e9eef2" stroke="#8ba0b3" />
      <path d="M12 7h9M12 11h9M12 15h5" stroke="#8ba0b3" strokeWidth="1.500" />
      <rect x="5" y="2" width="5" height="20" fill="#fbe64d" stroke="#b89400" />
      <g opacity=".8">
        <RedX />
      </g>
    </g>
  ),
  newcol: (
    <g>
      <rect x="2" y="3" width="20" height="18" fill="#e9eef2" stroke="#8ba0b3" />
      <path d="M12 7h9M12 11h9M12 15h5" stroke="#8ba0b3" strokeWidth="1.500" />
      <rect x="5" y="2" width="5" height="20" fill="#fbe64d" stroke="#b89400" />
      <StarBadge />
    </g>
  ),
  funnel: (
    <g>
      <rect x="1" y="1" width="22" height="22" rx="2" fill="#8f938d" stroke="#aaa" />
      <path d="M3 2h18l-6 9v12H9V11z" fill="#f4f5f2" />
    </g>
  ),
};

function Icon({ n, s, off = false }: { n: string; s?: number; off?: boolean }) {
  return (
    <Svg s={s} cls={off ? "grayscale opacity-50" : ""}>
      {icons[n]}
    </Svg>
  );
}

/* ---------- classic widgets ---------- */

const face = "bg-linear-to-b from-[#dcd9d1] to-[#c8c4bc]";
const frame = "border border-[#9a968e] rounded-[2px]";
const bold = "font-bold text-[11px] tracking-[0.06px]";

function Tri({ up = false, c = "#000", w = 8 }: { up?: boolean; c?: string; w?: number }) {
  return (
    <svg width={w} height={w / 2} viewBox="0 0 8 4" className="shrink-0">
      <path d={up ? "M0 4L4 0l4 4z" : "M0 0l4 4 4-4z"} fill={c} />
    </svg>
  );
}

function Check({ on = false }: { on?: boolean }) {
  return (
    <div className="flex h-[13px] w-[13px] shrink-0 items-center justify-center border border-[#b4b1aa] bg-linear-to-br from-[#f2f2f0] to-white">
      {on && (
        <svg width="9" height="9" viewBox="0 0 9 9">
          <path d="M1.300 1.300l6.400 6.400M7.700 1.300L1.300 7.700" stroke="#000" strokeWidth="2.900" />
        </svg>
      )}
    </div>
  );
}

function WinButton({ kind }: { kind: "min" | "max" | "restore" | "close" | "help" }) {
  return (
    <div className="flex h-[14px] w-[16px] items-center justify-center border border-t-white border-r-[#404040] border-b-[#404040] border-l-white bg-[#d4d0c8] shadow-[inset_-1px_-1px_0_#808080]">
      <svg width="11" height="10" viewBox="0 0 11 10" fill="none" stroke="#000">
        {kind === "min" && <path d="M2 8h5" strokeWidth="2" />}
        {kind === "max" && <path d="M1 1h8v7.500H1zM1 1.500h8" strokeWidth="1.200" />}
        {kind === "restore" && <path d="M3.500 3V.8h5V5H7M1.500 4h5v4.500h-5zM1.500 4.300h5M3.500 1.200h5" strokeWidth="1" />}
        {kind === "close" && <path d="M1.500 1.500l7 6.500M8.500 1.500l-7 6.500" strokeWidth="1.700" />}
        {kind === "help" && <path d="M3 3c0-2.800 5-2.800 5 0 0 1.600-2.500 1.600-2.500 3.200M5.500 7.500v1.800" strokeWidth="1.600" />}
      </svg>
    </div>
  );
}

function DockButtons() {
  const b = "flex h-[13px] w-[13px] items-center justify-center rounded-[2px] border border-[#6f6c66] bg-[#d4d0c8]";
  return (
    <div className="flex gap-[2px]">
      <div className={b}>
        <svg width="9" height="9" viewBox="0 0 9 9" fill="none" stroke="#000">
          <path d="M2.500 3V.8h6v4.700H6.500M.8 3.500h5.400v4.700H.8zM.8 4h5.400M2.500 1.200h6" strokeWidth="1.100" />
        </svg>
      </div>
      <div className={b}>
        <svg width="9" height="9" viewBox="0 0 9 9">
          <path d="M1 1l7 7M8 1L1 8" stroke="#000" strokeWidth="1.600" />
        </svg>
      </div>
    </div>
  );
}

const zig =
  "h-[6px] bg-[radial-gradient(circle_at_1px_1px,#fff_1px,transparent_1.400px),radial-gradient(circle_at_4px_4px,#fff_1px,transparent_1.400px),radial-gradient(circle_at_2px_2px,#a5a199_1px,transparent_1.500px),radial-gradient(circle_at_5px_5px,#a5a199_1px,transparent_1.500px)] bg-[length:6px_6px]";
const zigV =
  "w-[5px] bg-[radial-gradient(circle_at_1px_1px,#fff_1px,transparent_1.400px),radial-gradient(circle_at_4px_4px,#fff_1px,transparent_1.400px)] bg-[length:6px_6px]";
const dotsV = "bg-[radial-gradient(circle_at_1px_1px,#fff_1px,transparent_1.400px),radial-gradient(circle_at_2px_2px,#908c84_1px,transparent_1.500px)] bg-[length:5px_5px]";

function DockTitle({ text, pad, end = "pr-[1px]" }: { text: string; pad: string; end?: string }) {
  return (
    <div className={"flex h-[15px] shrink-0 items-center pl-[3px] " + end}>
      <div className={"flex-1 " + zig} />
      <span className={"whitespace-nowrap " + pad}>{text}</span>
      <div className={"mr-[4px] flex-1 " + zig} />
      <DockButtons />
    </div>
  );
}

function Combo({ text, cls, white = false, focus = false, arrow = "w-[16px]" }: { text?: string; cls: string; white?: boolean; focus?: boolean; arrow?: string }) {
  return (
    <div className={`flex shrink-0 overflow-hidden ${frame} ${white ? "bg-white" : face} ${cls}`}>
      <div className={"flex min-w-0 flex-1 items-center whitespace-nowrap " + (focus ? "m-[1px] border border-dotted border-black pl-[2px]" : "pl-[3px]")}>{text}</div>
      <div className={`flex items-center justify-center border-l border-[#9a968e] ${face} ${arrow}`}>
        <Tri />
      </div>
    </div>
  );
}

function Spin({ text, cls }: { text: string; cls: string }) {
  return (
    <div className={`flex shrink-0 overflow-hidden bg-white ${frame} ${cls}`}>
      <div className="flex flex-1 items-center pl-[4px]">{text}</div>
      <div className={`flex w-[16px] flex-col border-l border-[#9a968e] ${face}`}>
        <div className="flex flex-1 items-center justify-center border-b border-[#9a968e]">
          <Tri up />
        </div>
        <div className="flex flex-1 items-center justify-center">
          <Tri />
        </div>
      </div>
    </div>
  );
}

function ScrollBar({ before, thumb }: { before: string; thumb: string }) {
  const b = `flex h-[16px] shrink-0 items-center justify-center border border-[#77746d] rounded-[2px] ${face}`;
  return (
    <div className="flex w-[16px] shrink-0 flex-col bg-[repeating-conic-gradient(#d4d0c8_0_25%,#fff_0_50%)] bg-[length:2px_2px]">
      <div className={b}>
        <Tri up w={7} />
      </div>
      <div className={"shrink-0 " + before} />
      <div className={"flex shrink-0 items-center justify-center border border-[#77746d] bg-linear-to-r from-[#dfdcd5] to-[#c4c0b8] " + thumb}>
        <div className={"h-[19px] w-[11px] " + dotsV} />
      </div>
      <div className="flex-1" />
      <div className={b}>
        <Tri up w={7} />
      </div>
      <div className={b}>
        <Tri w={7} />
      </div>
    </div>
  );
}

/* ---------- toolbars ---------- */

const Handle = () => <div className={"ml-[9px] h-[30px] shrink-0 " + zigV} />;
const Cell = ({ children }: Kids) => <div className="flex w-[35px] shrink-0 items-center justify-center">{children}</div>;
const cells = (s: string) =>
  s.split(" ").map((n) => {
    const off = n.startsWith("-");
    const name = off ? n.slice(1) : n;
    return (
      <Cell key={n}>
        <Icon n={name} off={off} />
      </Cell>
    );
  });

const bar = "flex shrink-0 items-center border-b border-[#9c988f] shadow-[0_1px_0_#e4e1da]";

function Toolbars() {
  return (
    <>
      <div className={bar + " h-[39px]"}>
        <div className={"ml-[6px] h-[30px] shrink-0 " + zigV} />
        {cells("new open save saveas composer manager")}
        <Handle />
        {cells("touch pan pansel zin zout -z11 zfull zsel zlay zlast -znext refresh")}
        <Handle />
        {cells("info -action")}
        <div className="flex w-[13px] shrink-0 justify-center">
          <Tri c="#77746e" w={10} />
        </div>
        <div className="flex h-[33px] w-[33px] shrink-0 items-center justify-center rounded-l-[3px] border border-[#77746d] bg-[#bcb8b0]">
          <Icon n="select" />
        </div>
        <div className="mr-[2px] flex h-[33px] w-[12px] shrink-0 items-center justify-center rounded-r-[3px] border border-[#77746d] bg-[#bcb8b0]">
          <Tri w={9} />
        </div>
        {cells("desel expr table abacus measure")}
        <div className="flex w-[11px] shrink-0 justify-center">
          <Tri w={9} />
        </div>
        {cells("tip bmnew bm textann")}
        <div className="flex w-[11px] shrink-0 justify-center">
          <Tri w={9} />
        </div>
        <Handle />
        {cells("help whats")}
      </div>
      <div className={bar + " h-[39px]"}>
        <div className={"ml-[6px] h-[30px] shrink-0 " + zigV} />
        <div className="relative flex">
          {cells("pencils")}
          <div className="absolute right-0 bottom-[-3px]">
            <Tri w={5} />
          </div>
        </div>
        <div className="mx-[1px] flex h-[33px] w-[33px] shrink-0 items-center justify-center rounded-[3px] border border-[#77746d] bg-[#bcb8b0]">
          <Icon n="pencil" />
        </div>
        {cells("-savepen addpt movef node trash -cut -copy paste")}
        <Handle />
        {cells("-cad -undo -redo rotate -simplify -ring part -fillring -delring delpart -reshape -offset -split -splitp -merge -ptsym -rotpt")}
        <Handle />
        {cells("abc abcpin -abcpin2 -abceye -abcmove -abcrot abced")}
        <Handle />
        {cells("csw")}
        <Handle />
        {cells("python")}
      </div>
      <div className={bar + " h-[38px]"}>
        <div className={"ml-[6px] h-[30px] shrink-0 " + zigV} />
        {cells("gopen gnew -gclose")}
        <div className="mr-[1px] ml-[1px] h-[30px] w-[2px] border-l border-[#a09c94] bg-white" />
        {cells("gvec grast -gvnew -gved -gtools -greg -greged")}
        <Handle />
        {cells("cross coord gps route topo")}
      </div>
    </>
  );
}

/* ---------- left side ---------- */

function LeftTools() {
  const list = "lvec lrast lpg lfeat lmssql lora lorar lwms lwcs lwfs lcsv".split(" ");
  return (
    <div className="mb-[1px] flex w-[52px] shrink-0 flex-col items-center border-r border-[#9c988f] pt-[6px]">
      <div className={"w-[42px] shrink-0 " + zig} />
      {list.map((n) => (
        <div key={n} className="flex h-[34px] shrink-0 items-center">
          <Icon n={n} />
        </div>
      ))}
      <div className="flex h-[34px] shrink-0 items-center gap-[6px] pl-[3px]">
        <Icon n="lnew" />
        <Tri w={9} />
      </div>
      <div className="flex h-[34px] shrink-0 items-center">
        <Icon n="lgps" />
      </div>
    </div>
  );
}

function Expander({ open }: { open: boolean }) {
  return (
    <div className="absolute top-1/2 left-[-4px] flex h-[9px] w-[9px] -translate-y-1/2 items-center justify-center border border-[#808080] bg-white">
      <svg width="5" height="5" viewBox="0 0 5 5">
        <path d={open ? "M0 2.500h5" : "M0 2.500h5M2.500 0v5"} stroke="#000" />
      </svg>
    </div>
  );
}

/* One 20px column of tree lines; "mid" and "end" carry a branch, "bar" only passes through. */
function Branch({ kind, exp }: { kind: "mid" | "end" | "bar" | "top"; exp?: "open" | "closed" }) {
  const line = "border-dotted border-[#8a8a8a] ";
  return (
    <div className="relative ml-[10px] flex w-[10px] shrink-0 flex-col self-stretch">
      <div className={line + (kind === "bar" ? "h-1/2 border-l" : kind === "top" ? "h-1/2 border-b" : "h-1/2 border-b border-l")} />
      <div className={line + (kind === "mid" || kind === "bar" ? "h-1/2 border-l" : "h-1/2")} />
      {exp && <Expander open={exp === "open"} />}
    </div>
  );
}

type Layer = { t: string; on?: boolean; sym: string; exp?: "open" | "closed"; sub?: boolean; sel?: boolean; end?: boolean };
const layers: Layer[] = [
  { t: "Zona industrial (centroide)", on: true, sym: "edit", sel: true },
  { t: "Puntos puertos", on: true, sym: "red" },
  { t: "Puntos coste", on: true, sym: "pts", exp: "open" },
  { t: "459.7000 - 466.3080", on: true, sym: "#feedde", sub: true },
  { t: "466.3080 - 471.7380", on: true, sym: "#fdc58c", sub: true },
  { t: "471.7380 - 478.0380", on: true, sym: "#fd8d3c", sub: true },
  { t: "478.0380 - 485.2360", on: true, sym: "#e0560b", sub: true },
  { t: "485.2360 - 499.4600", on: true, sym: "#8a2f0a", sub: true, end: true },
  { t: "Coste total", sym: "raster", exp: "closed" },
  { t: "Coste Algeciras", sym: "raster", exp: "closed" },
  { t: "Coste Cádiz", sym: "raster", exp: "closed" },
  { t: "Coste Sevilla", sym: "raster", exp: "closed" },
  { t: "Coste Huelva", sym: "raster", exp: "closed" },
  { t: "Puertos objetivo", on: true, sym: "teal" },
  { t: "Coste carreteras", sym: "raster", exp: "closed" },
  { t: "Zona industrial", sym: "brown" },
  { t: "Carreteras aptas", sym: "line" },
  { t: "Zona interés", on: true, sym: "gray", end: true },
];

function Sym({ k }: { k: string }) {
  return (
    <svg width="16" height="16" viewBox="0 0 16 16" fill="none" className="shrink-0">
      {k === "edit" && (
        <g>
          <circle cx="8" cy="9" r="4" fill="#2f5f8f" stroke="#111" />
          <path d="M4 13L11 1l3 1.500L7 14l-3 1.500z" fill="#c9b45a" stroke="#6b5a20" strokeWidth=".8" />
        </g>
      )}
      {k === "red" && <circle cx="8" cy="8" r="5.700" fill="#f00" stroke="#400" />}
      {k === "pts" && (
        <g fill="#eee" stroke="#888">
          <circle cx="12.500" cy="2.500" r="1.200" />
          <circle cx="5.500" cy="5.500" r="1.200" />
          <circle cx="3.500" cy="12.500" r="1.200" />
        </g>
      )}
      {k === "raster" && (
        <g>
          <rect width="16" height="16" fill="#6e98c8" />
          <path d="M0 1h5v4H0zM11 0h5v5h-5zM6 5h4v5H6zM0 11h5v5H0z" fill="#263d5c" />
          <path d="M11 11h5v5h-5z" fill="#fff" />
          <path d="M0 5h16M0 10.500h16M5.500 0v16M10.500 0v16" stroke="#53779f" strokeWidth=".5" />
        </g>
      )}
      {k === "teal" && <rect x=".5" y=".5" width="15" height="15" fill="#93ebdf" stroke="#555" />}
      {k === "brown" && <rect x=".5" y=".5" width="15" height="15" fill="#c98f6a" stroke="#444" />}
      {k === "gray" && <rect x=".5" y=".5" width="15" height="15" fill="#9d9d9d" stroke="#444" />}
      {k === "line" && <path d="M0 7.500h16" stroke="#555" />}
      {k[0] === "#" && <circle cx="8" cy="8" r="2" fill={k} />}
    </svg>
  );
}

function LayerRow({ l }: { l: Layer }) {
  return (
    <div className={"flex h-[16px] shrink-0 items-center " + (l.sel ? "bg-[#d4d0c8]" : "")}>
      <Branch kind={l.sub ? "bar" : l.end ? "end" : "mid"} exp={l.exp} />
      {l.sub && <Branch kind={l.end ? "end" : "mid"} />}
      <div className="w-[3px]" />
      <Check on={l.on} />
      <div className="w-[6px]" />
      <Sym k={l.sym} />
      <span className={"whitespace-nowrap " + (l.sub ? "pl-[8px]" : "ml-[5px] text-[11px] font-bold tracking-[0.1px]") + (l.sel ? " underline" : "")}>{l.t}</span>
    </div>
  );
}

function LeftDock() {
  return (
    <div className="flex w-[286px] shrink-0 flex-col pt-[3px]">
      <DockTitle text="Capas" pad="px-[9px]" end="pr-[3px]" />
      <div className="flex h-[34px] shrink-0 items-center gap-[16px] pb-[3px] pl-[10px]">
        <Icon n="addgroup" s={16} />
        <div className="relative flex">
          <Icon n="eye" s={16} />
          <div className="absolute right-[-3px] bottom-[-3px]">
            <Tri w={5} />
          </div>
        </div>
        <Icon n="filter" s={16} />
        <Icon n="expand" s={16} />
        <Icon n="collapse" s={16} />
        <Icon n="remove" s={16} />
      </div>
      <div className={`mx-[1px] flex h-[532px] shrink-0 flex-col bg-white pt-[1px] ${frame}`}>
        {layers.map((l) => (
          <LayerRow key={l.t} l={l} />
        ))}
      </div>
      <div className={"mx-auto mt-[2px] h-[5px] w-[93px] shrink-0 " + dotsV} />
      <div className="h-[1px] shrink-0" />
      <DockTitle text="Resultados de la identificación" pad="px-[15px] text-[10px] tracking-[-0.35px]" end="pr-[3px]" />
      <div className="flex h-[37px] shrink-0 items-center gap-[16px] pb-[7px] pl-[10px]">
        <Icon n="expand" s={16} />
        <Icon n="collapse" s={16} />
        <Icon n="expnew" s={16} />
        <Icon n="form" s={16} />
        <Icon n="desel" s={16} />
        <Icon n="copy" s={16} off />
        <Icon n="print" s={16} off />
      </div>
      <div className={`mx-[1px] flex h-[134px] shrink-0 flex-col bg-white ${frame}`}>
        <div className="flex h-[20px] shrink-0">
          <div className={`flex w-[158px] items-center border-r-2 border-b border-[#8a877f] pl-[3px] ${face}`}>Objeto espacial</div>
          <div className={`flex flex-1 items-center border-b border-[#8a877f] pl-[3px] ${face}`}>Valor</div>
        </div>
        <div className="flex h-[13px] items-center">
          <div className="flex w-[161px] items-center self-stretch">
            <Branch kind="top" exp="open" />
            <span className="pl-[2px]">0</span>
          </div>
          Coste total
        </div>
        <div className="flex h-[13px] items-center bg-[#d4d0c8]">
          <div className="flex w-[161px] items-center self-stretch">
            <div className="w-[20px]" />
            <Branch kind="top" exp="open" />
            <span className="pl-[2px]">Coste total</span>
          </div>
        </div>
        <div className="flex h-[13px] items-center">
          <div className="flex w-[161px] items-center self-stretch">
            <div className="w-[40px]" />
            <Branch kind="mid" />
            <span className="pl-[2px]">Banda 1</span>
          </div>
          461.13
        </div>
        <div className="flex h-[13px] items-center bg-[#f5f5f5]">
          <div className="flex w-[161px] items-center self-stretch">
            <div className="w-[40px]" />
            <Branch kind="end" exp="closed" />
            <span className="pl-[2px]">(Derivado)</span>
          </div>
        </div>
      </div>
      <div className="mt-[4px] flex h-[20px] shrink-0 items-center pl-[4px]">
        <span className="w-[33px]">Modo</span>
        <Combo text="Capa actual" cls="h-[20px] w-[114px]" />
        <div className="w-[6px]" />
        <Check />
        <span className="pl-[5px] whitespace-nowrap">Auto abrir formulario</span>
      </div>
      <div className="mt-[8px] flex h-[22px] shrink-0 items-center pl-[4px]">
        <span className="w-[22px]">Ver</span>
        <Combo text="Árbol" cls="h-[20px] w-[72px]" />
        <div className={`mr-[6px] ml-auto flex h-[22px] w-[47px] items-center justify-center rounded-[2px] border border-[#77746d] ${face}`}>Ayuda</div>
      </div>
    </div>
  );
}

/* ---------- map ---------- */

type P = [number, number];
const col = { a: "#fff1e6", b: "#fdc998", c: "#fd8d3c", d: "#e0560b", e: "#842b08" };
const vert = (x: number, y0: number, y1: number, n: number): P[] => Array.from({ length: n }, (_, i) => [x, y0 + ((y1 - y0) * i) / (n - 1)] as P);

const north: [string, P[]][] = [
  [col.e, [[816,272],[801,272],[789,287],[704,356],[717,356],[759,371],[774,371],[576,570],[591,570],[606,570],[801,806],[816,806],[789,863],[801,863],[549,1058],[561,1058],[576,1058],[591,1073],[606,1073],[618,1058]]],
  [col.d, [[774,302],[759,302],[759,314],[747,329],[747,344],[747,356],[747,371],[732,371],[732,386],[732,398],[732,413],[789,344],[789,356],[801,329],[816,314],[789,371],[801,398],[789,398],[789,413],[774,428],[618,570],[663,581],[648,597],[774,849],[789,806],[633,1032],[633,1046],[648,1017]]],
  [col.c, [[732,428],[732,443],[732,455],[732,470],[732,485],[717,485],[747,455],[759,443],[705,497],[690,497],[690,512],[675,512],[705,512],[675,527],[705,527],[705,540],[705,555],[663,540],[648,555],[648,570],[675,581],[618,597],[618,612],[618,624],[534,849],[549,849],[564,849],[576,878],[576,890],[564,890],[549,906],[564,906],[774,806],[759,833],[663,1017],[675,1017]]],
  [col.b, [[690,570],[690,581],...vert(705,597,665,6),[606,624],[606,639],[606,654],[606,666],[618,681],[633,696],[648,708],[648,723],[576,863],[591,863],[618,849],[759,806],[675,1032],[690,1032],[705,1032]]],
  [col.a, [[705,681],...vert(690,696,750,5),[675,738],[663,738],...vert(648,738,792,5),[705,765],[717,765],[732,780],[732,792],[732,806],[717,806],[705,806],[690,806],[747,806],[663,806],[663,821],[675,821],[663,833],[675,833],[648,833],[690,833],[690,849],[747,821],[732,821],[732,833],[732,849],[747,863],[747,878],[732,878],[759,878],[759,890],[705,863],[717,863],[774,906],...vert(789,920,1032,9),[774,1032],[747,1032],[717,1046],[732,1046],[747,1046],[759,1046],[747,1058],[759,1073],[759,1088],[774,1100],[789,1115],[801,1115],[816,1115]]],
];
const south: [string, P[]][] = [
  [col.c, [[648,309],[659,309],[659,323],[670,323],[670,336],[678,351],[678,365],[688,378],[699,393],[699,407],[708,420],[718,420],[729,435],[729,449],[729,462],[739,477]]],
  [col.d, [...vert(739,491,575,7),[748,591],[758,603],[758,617],[769,617],[769,632],[769,645],[769,660],[777,675],[788,687],[799,702],[807,716],[817,716],[828,729],[837,729],[847,743],[857,743],[866,758],[877,771],[887,771],[887,786],[896,801],[907,813],[917,813],[927,813],[927,827],[937,827],[947,827],[957,813],[966,801],[977,801],[977,786],[987,786],[996,786],[987,771],[996,771],[996,758],[1006,758],[1006,743],[1017,743],[1017,729],[1026,729],[1036,729],[1036,716],[1047,716],[1047,702],[1055,702],[1055,687],[1066,687],[1076,687],[1085,687],[1095,675],[1095,660],[1106,645]]],
  [col.e, [[1115,645],[1125,645],[1125,632],[1136,632],[1146,632],[1146,617],[1155,617],[1165,603],[1176,603],[1176,591],[1185,575],[1185,560],[1195,560],[1185,548],[1185,533],[1176,518],[1176,507],[1185,491],[1185,477],[1185,462],[1195,462],[1195,450],[1195,435],[1206,435],[1214,435],[1206,420],[1195,420],[1185,420],[1185,408],[1185,393],[1214,491],[1214,480]]],
];
const northBlue: P[] = [[321,495],[813,341],[795,383],[684,537],[636,578],[606,861],[633,852],[555,876],[483,939],[708,950],[675,990],[726,1028],[777,1167],[819,1239]];
const southBlue: P[] = [[1241,351],[1299,336],[1348,363],[1384,345],[1161,558]];
const topDots: P[] = [[681,182],[681,187],[677,191],[677,196],[672,200],[667,204],[673,204]];

const nx = (p: P): P => [340 + p[0] / 3, 155 + p[1] / 3];
const sx = (p: P): P => [610 + p[0] / 2.119, 700 + p[1] / 3];

function Pts({ pts, f, r = 2.1, s }: { pts: P[]; f: string; r?: number; s?: string }) {
  return (
    <g fill={f} stroke={s} strokeWidth={s ? 1.1 : 0}>
      {pts.map((p, i) => (
        <circle key={i} cx={p[0]} cy={p[1]} r={r} />
      ))}
    </g>
  );
}

function MapView() {
  return (
    <div className="mt-[2px] mb-[3px] w-[1010px] shrink-0 overflow-hidden rounded-[2px] border border-[#9a968e] bg-[#9d9d9d]">
      <svg width="1008" height="836" viewBox="345 161 1008 836" className="block">
        <path d="M340 876l106 22.500 2.500-24.500 54.500 5 100 13.500 8.500 4 14-3.500 21.500-20 55-19.500 16.500-19v103l12 60H340z" fill="#fff" stroke="#111" />
        <path d="M868 155l35 53 70 100h400V155z" fill="#fff" stroke="#111" />
        <Pts pts={topDots} f="#b03c0c" />
        {north.map(([c, pts]) => (
          <Pts key={c} f={c} pts={pts.map(nx)} />
        ))}
        {south.map(([c, pts]) => (
          <Pts key={c} f={c} pts={pts.map(sx)} />
        ))}
        <g stroke="#16312e" strokeWidth="1" strokeLinejoin="round">
          <path d="M483 422l1.500-3 3.500 1-1 3-3 2.500-2 4 5 5 3-1 3-4 2-3.500 2 3 3 1-3 2-3 .5-1 3 1 3 3 6-5-5-3-1-2-3-5-4-2-5z" fill="#93ebdf" />
          <path d="M494 421l1.500 5M489 430l4-4M486 438l8 .5" fill="none" />
        </g>
        <path d="M1186 851l4-1v6l-1 8-2 4h7v-2h6v12h-2v-3l-7 .5-1 4-2 3-4-2 1-7-1.500-8 3-2-2-5z" fill="#93ebdf" stroke="#163330" strokeWidth="1.100" />
        <path d="M1196 851l-2 8-.5 7M1204 864v18" stroke="#222" strokeWidth="1.400" fill="none" />
        <circle cx="509" cy="441" r="5.700" fill="#f00" stroke="#111" />
        <Pts pts={[...northBlue, [522, 849] as P].map(nx)} f="#4b9fc4" s="#111" r={3.900} />
        <Pts pts={southBlue.map(sx)} f="#4b9fc4" s="#111" r={3.900} />
        <circle cx="1183" cy="853" r="5.500" fill="#ff0" stroke="#111" />
      </svg>
    </div>
  );
}

/* ---------- right side ---------- */

const tree: string[] = [
  "Regular points", "Vector grid", "*Vector general tools", "Delete duplicate geometries", "Join attributes by location",
  "Join attributes table", "Merge vector layers", "Polygon from layer extent", "Reproject layer", "Save selected features",
  "Set style for vector layer", "Snap points to grid", "Split vector layer", "*Vector geometry tools", "Concave hull",
  "Convert geometry type", "Convex hull", "Create points along lines", "Delaunay triangulation", "Densify geometries",
  "Densify geometries given an interval", "Dissolve", "Eliminate sliver polygons", "Explode lines", "Extract nodes",
  "Fill holes", "Fixed distance buffer", "Keep n biggest parts", "Lines to polygons", "Multipart to singleparts",
  "Points displacement", "Polygon centroids", "Polygonize", "Polygons to lines", "Simplify geometries",
  "Singleparts to multipart", "Variable distance buffer", "Voronoi polygons", "*Vector overlay tools", "Clip",
  "Difference", "Intersection", "Line intersections", "Split lines with lines", "Symetrical difference", "Union",
  "*Vector selection tools", "Extract by attribute", "Extract by location",
];

function TreeRow({ t, last }: { t: string; last: boolean }) {
  const cat = t[0] === "*";
  return (
    <div className={"flex shrink-0 items-center " + (cat ? "h-[13px] " : "h-[16px] ") + (t === "Polygon centroids" ? "bg-[#d4d0c8]" : "")}>
      <Branch kind="bar" />
      <Branch kind={cat ? "mid" : "bar"} exp={cat ? "open" : undefined} />
      {!cat && (
        <>
          <Branch kind={last ? "end" : "mid"} />
          <div className="w-[4px]" />
          <Svg s={16}>
            <QLeaf />
          </Svg>
        </>
      )}
      <span className={"whitespace-nowrap " + (cat ? "pl-[3px]" : "pl-[5px]")}>{cat ? t.slice(1) : t}</span>
    </div>
  );
}

function RightDock() {
  return (
    <div className="flex w-[688px] shrink-0 flex-col pt-[3px]">
      <DockTitle text="Caja de herramientas de procesado" pad="px-[18px] text-[10px] tracking-[-0.3px]" />
      <div className={`mt-[3px] mr-[1px] flex h-[24px] shrink-0 items-center bg-white pl-[3px] text-[#808080] ${frame}`}>Buscar...</div>
      <div className={`mt-[4px] mr-[1px] flex h-[768px] shrink-0 bg-white ${frame}`}>
        <div className="flex flex-1 flex-col overflow-hidden pt-[2px]">
          {tree.map((t, i) => (
            <TreeRow key={t} t={t} last={(tree[i + 1] ?? "").startsWith("*")} />
          ))}
        </div>
        <ScrollBar before="h-[266px]" thumb="h-[353px]" />
      </div>
      <Combo text="Advanced interface" cls="mt-[3px] mr-[1px] h-[19px]" arrow="w-[15px]" />
    </div>
  );
}

/* ---------- attribute table window ---------- */

const winFrame =
  "absolute flex flex-col border border-t-[#d4d0c8] border-r-[#404040] border-b-[#404040] border-l-[#d4d0c8] bg-[#d4d0c8] p-[3px] shadow-[inset_1px_1px_0_#fff,inset_-1px_-1px_0_#808080]";

function AttributeWindow() {
  const cols = ["DESCRIPCIO", "NIVEL3", "COD_ENT"];
  const tool = (n: string, off = false) => (
    <div key={n} className="flex w-[31px] shrink-0 items-center justify-center">
      <Icon n={n} s={18} off={off} />
    </div>
  );
  const sep = <div className="mx-[2px] h-[27px] w-[2px] border-l border-[#8a877f] bg-white" />;
  return (
    <div className={winFrame + " top-[205px] left-[615px] h-[597px] w-[845px]"}>
      <div className="flex h-[18px] shrink-0 items-center bg-linear-to-r from-[#808080] to-[#c0c0c0] pr-[2px] pl-[3px]">
        <Svg s={14}>
          <QLogo />
        </Svg>
        <span className={"flex-1 pl-[3px] whitespace-nowrap text-[#d4d0c8] " + bold}>
          Tabla de atributos - Zona industrial (centroide) :: Objetos espaciales totales: 67, filtrados: 67, seleccionados: 0
        </span>
        <WinButton kind="min" />
        <WinButton kind="max" />
        <div className="w-[2px]" />
        <WinButton kind="close" />
      </div>
      <div className="flex h-[35px] shrink-0 items-center pl-[3px]">
        <div className="mr-[1px] flex h-[27px] w-[28px] items-center justify-center rounded-[2px] border border-[#77746d] bg-[#bcb8b0]">
          <Icon n="pencil" s={18} />
        </div>
        {tool("floppyed")}
        {sep}
        {tool("trashred")}
        {sep}
        {["expr", "desel", "seltop", "invert", "pansel", "zsel", "copyrow"].map((n) => tool(n))}
        {sep}
        {["delcol", "newcol", "abacus"].map((n) => tool(n))}
        <span className="mr-[11px] ml-auto">¿?</span>
      </div>
      <div className="flex h-[25px] shrink-0 items-center pl-[3px]">
        <Combo text="DESCRIPCIO" cls="h-[20px] w-[91px]" />
        <span className="w-[14px] text-center">=</span>
        <div className={`flex h-[25px] w-[26px] items-center justify-center rounded-[2px] border border-[#77746d] ${face}`}>
          <svg width="14" height="15" viewBox="-1 0 13 15" fill="none">
            <Epsilon />
          </svg>
        </div>
        <div className="w-[6px]" />
        <Combo white cls="h-[24px] w-[465px]" />
        <div className={`ml-[3px] flex h-[22px] w-[88px] items-center justify-center rounded-[2px] border border-[#77746d] whitespace-nowrap ${face}`}>Actualizar todo</div>
        <div className={`ml-[3px] flex h-[22px] w-[138px] items-center justify-center rounded-[2px] border border-[#8a877f] whitespace-nowrap text-[#85827b] [text-shadow:1px_1px_0_#fff] ${face}`}>
          Actualizar lo seleccionado
        </div>
      </div>
      <div className={`mt-[6px] flex h-[473px] shrink-0 bg-white pr-[1px] ${frame}`}>
        <div className="flex min-w-0 flex-1 flex-col overflow-hidden">
          <div className="flex h-[22px] shrink-0 bg-[#d4d0c8] pt-[1px] pl-[1px]">
            <div className={`w-[22px] border-r-2 border-b border-[#77746d] ${face}`} />
            {cols.map((c) => (
              <div key={c} className={`relative flex w-[100px] items-center justify-center border-r-2 border-b border-[#77746d] ${face} ${c === "DESCRIPCIO" ? "pr-[20px]" : ""}`}>
                {c}
                {c === "DESCRIPCIO" && (
                  <svg width="11" height="9" viewBox="0 0 11 9" className="absolute top-[4px] right-[6px]" fill="none">
                    <path d="M.5.5h10L5.500 8.500z" stroke="#fff" />
                    <path d="M10.500.5H.5l5 8" stroke="#8a877f" />
                  </svg>
                )}
              </div>
            ))}
          </div>
          {Array.from({ length: 23 }, (_, i) => (
            <div key={i} className="flex h-[20px] shrink-0 pl-[1px]">
              <div className={`flex w-[22px] items-center border-r-2 border-b-2 border-[#77746d] pt-[4px] pl-[3px] ${face}`}>{i}</div>
              {["Zonas industriale...", "121", "us01"].map((t) => (
                <div key={t} className={"w-[100px] border-r border-b border-[#8f8c85] pl-[3px] leading-[15px] whitespace-nowrap " + (i % 2 ? "bg-[#f5f5f5]" : "bg-white")}>
                  {t}
                </div>
              ))}
            </div>
          ))}
        </div>
        <ScrollBar before="h-[1px]" thumb="h-[137px]" />
      </div>
      <div className="mt-[4px] flex items-center pl-[3px]">
        <div className={`relative flex h-[25px] w-[210px] items-center rounded-[2px] border border-[#77746d] pl-[6px] ${face}`}>
          <Icon n="funnel" s={14} />
          <span className="pl-[5px] tracking-[0.05px] whitespace-nowrap">Mostrar todos los objetos espaciales</span>
          <div className="absolute right-[2px] bottom-[3px]">
            <Tri w={5} />
          </div>
        </div>
        <div className={`ml-auto flex h-[25px] w-[25px] items-center justify-center rounded-[2px] border border-[#77746d] ${face}`}>
          <Icon n="formb" s={16} />
        </div>
        <div className="mr-[3px] ml-[1px] flex h-[25px] w-[26px] items-center justify-center rounded-[2px] border border-[#77746d] bg-[#bcb8b0]">
          <Icon n="table" s={15} />
        </div>
      </div>
    </div>
  );
}

function AddColumnDialog() {
  const field = `h-[20px] w-[160px] bg-white px-[4px] leading-[19px] ${frame}`;
  const label = "w-[95px] shrink-0 whitespace-nowrap";
  return (
    <div className={winFrame + " top-[390px] left-[895px] h-[228px] w-[284px]"}>
      <div className="flex h-[18px] shrink-0 items-center bg-linear-to-r from-[#0a246a] to-[#a6caf0] pr-[2px] pl-[3px]">
        <Svg s={14}>
          <QLogo />
        </Svg>
        <span className={"flex-1 pl-[3px] text-white " + bold}>Añadir columna</span>
        <WinButton kind="help" />
        <div className="w-[2px]" />
        <WinButton kind="close" />
      </div>
      <div className="mt-[12px] flex flex-col pl-[10px]">
        <div className="mb-[6px] flex items-center">
          <span className={label}>Nombre</span>
          <div className={field}>id</div>
        </div>
        <div className="mb-[6px] flex items-center">
          <span className={label}>Comentario</span>
          <div className={field} />
        </div>
        <div className="mb-[6px] flex items-center">
          <span className={label}>Tipo</span>
          <Combo text="Número entero (entero)" focus cls="h-[20px] w-[160px]" />
        </div>
        <div className="mb-[5px] flex h-[14px] items-center">
          <span className={label}>Tipo de proveedor</span>
          <span>integer</span>
        </div>
        <div className="mb-[39px] flex items-center">
          <span className={label}>Anchura</span>
          <Spin text="1" cls="h-[20px] w-[160px]" />
        </div>
        <div className="flex gap-[10px] pl-[95px]">
          <div className={`flex h-[23px] w-[75px] items-center justify-center rounded-[2px] border border-[#4f4d49] ${face}`}>Aceptar</div>
          <div className={`flex h-[23px] w-[75px] items-center justify-center rounded-[2px] border border-[#8a877f] ${face}`}>Cancelar</div>
        </div>
      </div>
    </div>
  );
}

/* ---------- bottom bars ---------- */

function StatusBar() {
  return (
    <div className="flex h-[29px] shrink-0 items-center pb-[2px] whitespace-nowrap">
      <div className="ml-[1063px] flex h-[18px] w-[18px] items-center justify-center rounded-[2px] border border-[#8a877f]">
        <svg width="14" height="14" viewBox="0 0 14 14" fill="none" stroke="#222" strokeWidth="1.300">
          <circle cx="4" cy="4" r="2.500" />
          <path d="M5.500 5.500l5.500 7M3 10l3-2 5 4.500M6 10c3-3 6 0 4 2s-5 1-4-2zM7 2l3 3M10.500 2l-4 4" />
        </svg>
      </div>
      <span className="ml-[11px] w-[72px]">Coordenada:</span>
      <div className={`flex h-[20px] w-[300px] items-center justify-center bg-white ${frame}`}>219418,4064402</div>
      <span className="ml-[8px] w-[43px]">Escala</span>
      <Combo white text="1:403.484" cls="h-[20px] w-[88px]" />
      <span className="ml-[9px] w-[56px]">Rotación:</span>
      <Spin text="0,0" cls="h-[25px] w-[97px]" />
      <div className="w-[7px]" />
      <Check on />
      <span className="ml-[5px] w-[78px]">Representar</span>
      <svg width="16" height="16" viewBox="0 0 16 16" fill="none">
        <circle cx="8" cy="8" r="6" fill="#777" stroke="#222" strokeWidth="2" />
        <path d="M8 0v16M0 8h16" stroke="#222" strokeWidth="1.300" />
        <circle cx="8" cy="8" r="2.800" fill="#ddd" stroke="#222" />
      </svg>
      <span className="ml-[4px] w-[128px]">EPSG:25830 (al vuelo)</span>
      <svg width="17" height="17" viewBox="0 0 17 17">
        <path d="M8.500 1a7 7 0 1 1 0 13.500c1.500 0 4 .5 6 2l-1-5" fill="#6b6b6b" />
        <circle cx="8.500" cy="7.500" r="7" fill="#6b6b6b" />
      </svg>
    </div>
  );
}

function TaskBar() {
  const raised = "border border-t-white border-r-[#404040] border-b-[#404040] border-l-white shadow-[inset_-1px_-1px_0_#808080]";
  return (
    <div className="flex h-[27px] shrink-0 items-center border-t border-white pl-[2px]">
      <div className={"flex h-[22px] w-[54px] items-center gap-[1px] pl-[2px] " + bold + " " + raised}>
        <svg width="16" height="15" viewBox="0 0 16 15">
          <path d="M2 2c2-1.500 4-1 6 0L7 7C5 6 3 6 1 7z" fill="#e8541e" />
          <path d="M9 2.300c2 .8 4 .8 6-.5l-1.300 5c-2 1.200-4 1-5.700.2z" fill="#7ab51d" />
          <path d="M.8 8c2-1 4-1 6 0l-1.300 5c-2-1-4-1-6 .2z" fill="#2f8ad8" />
          <path d="M7.800 8.300c2 .8 4 .8 5.700-.3l-1.300 5c-2 1.200-4 1-5.700.3z" fill="#fbc21c" />
        </svg>
        Inicio
      </div>
      <div className={"ml-[9px] flex h-[22px] w-[29px] items-center justify-center " + raised}>
        <svg width="17" height="15" viewBox="0 0 17 15">
          <path d="M1 1h6l1 2h8v9H1z" fill="#f3d98a" stroke="#c9a84a" strokeWidth=".8" />
          <path d="M2 14V8h13v6h-3v-3H5v3z" fill="#6bb5e8" stroke="#3d84b8" strokeWidth=".8" />
        </svg>
      </div>
      <div className="h-[20px] w-[3px] border-r border-r-[#404040] border-l border-l-white" />
      <svg width="14" height="14" viewBox="0 0 14 14" className="ml-[11px]">
        <circle cx="7" cy="7" r="7" fill="#fff" />
        <path d="M7 7L.9 3.500A7 7 0 0 1 13.100 3.500z" fill="#dd4b3e" />
        <path d="M7 7L.9 3.500A7 7 0 0 0 7 14z" fill="#1da362" />
        <path d="M7 7l6.100-3.500A7 7 0 0 1 7 14z" fill="#ffce43" />
        <circle cx="7" cy="7" r="3.200" fill="#fff" />
        <circle cx="7" cy="7" r="2.500" fill="#4a8af4" />
      </svg>
      <div className="ml-[11px] flex h-[22px] w-[28px] items-center justify-center border border-t-[#404040] border-r-white border-b-white border-l-[#404040] bg-white">
        <Svg s={15}>
          <QLogo />
        </Svg>
      </div>
      <div className="h-[20px] w-[3px] border-r border-white" />
      <span className="ml-auto">ES</span>
      <div className="ml-[8px] h-[22px] w-[2px] border-l border-[#808080] bg-white" />
      <div className="mr-[2px] ml-[1px] flex h-[22px] w-[153px] items-center border border-t-[#808080] border-r-white border-b-white border-l-[#808080] pl-[5px]">
        <svg width="7" height="10" viewBox="0 0 7 10" fill="none" stroke="#000" strokeWidth="1.400">
          <path d="M1 4.500L3.500 2 6 4.500M1 8.500L3.500 6 6 8.500" />
        </svg>
        <svg width="16" height="14" viewBox="0 0 16 14" className="ml-[9px]" fill="#fff" stroke="#555">
          <path d="M1 5h3l4-4v12L4 9H1z" />
          <path d="M10 4c1.500 2 1.500 4 0 6M12 2c3 3 3 7 0 10" fill="none" />
        </svg>
        <svg width="16" height="15" viewBox="0 0 16 15" className="ml-[8px]" fill="#ddd" stroke="#444">
          <rect x="4" y="3" width="11" height="9" />
          <rect x="6" y="5" width="7" height="5" fill="#888" />
          <path d="M1 1h4v5H1zM3 6v8h8" fill="none" />
        </svg>
        <svg width="15" height="15" viewBox="0 0 15 15" className="ml-[8px]" fill="#fff" stroke="#444">
          <path d="M1 1v13M2 2c4-2 5 2 12 0-1 3-1 4 0 6-6 2-8-1-12 0z" />
        </svg>
        <span className="ml-[17px]">7:25</span>
        <svg width="15" height="13" viewBox="0 0 15 13" className="mr-[2px] ml-auto">
          <rect width="15" height="13" fill="#1f62c4" />
          <path d="M0 0h15L4 9H0z" fill="#4b9ae8" />
          <rect y="11" width="15" height="2" fill="#163b6b" />
          <circle cx="2.500" cy="11" r="2" fill="#e8701e" />
        </svg>
      </div>
    </div>
  );
}

const menus: [string, string][] = [
  ["Proyecto", "w-[58px]"],
  ["Edición", "w-[49px]"],
  ["Ver", "w-[29px]"],
  ["Capa", "w-[40px]"],
  ["Configuración", "w-[81px]"],
  ["Complementos", "w-[85px]"],
  ["Vectorial", "w-[55px]"],
  ["Ráster", "w-[47px]"],
  ["Base de datos", "w-[84px]"],
  ["Web", "w-[36px]"],
  ["Procesos", "w-[58px]"],
  ["Ayuda", "w-[40px]"],
];

export default function App() {
  return (
    <div className="relative flex h-[1056px] w-[2048px] flex-col overflow-hidden bg-[#d4d0c8] [font-family:'DejaVu_Sans_Condensed','DejaVu_Sans',sans-serif] text-[10.500px] leading-[13px] text-black">
      <div className="flex h-[18px] shrink-0 items-center bg-linear-to-r from-[#808080] to-[#c0c0c0] pr-[4px] pl-[3px]">
        <Svg s={14}>
          <QLogo />
        </Svg>
        <span className={"flex-1 pl-[3px] text-[#d4d0c8] " + bold}>QGIS 2.8.1-Wien - a</span>
        <WinButton kind="min" />
        <WinButton kind="restore" />
        <div className="w-[2px]" />
        <WinButton kind="close" />
      </div>
      <div className="flex h-[24px] shrink-0 items-center border-b border-[#9c988f] pt-[3px] pl-[9px]">
        {menus.map(([t, w]) => (
          <span key={t} className={"shrink-0 whitespace-nowrap " + w}>
            {t}
          </span>
        ))}
      </div>
      <Toolbars />
      <div className="flex h-[842px] shrink-0">
        <LeftTools />
        <LeftDock />
        <div className="flex w-[6px] shrink-0 items-center pl-[2px]">
          <div className={"h-[275px] w-[3px] " + dotsV} />
        </div>
        <MapView />
        <div className="w-[6px] shrink-0" />
        <RightDock />
      </div>
      <StatusBar />
      <TaskBar />
      <AttributeWindow />
      <AddColumnDialog />
    </div>
  );
}
